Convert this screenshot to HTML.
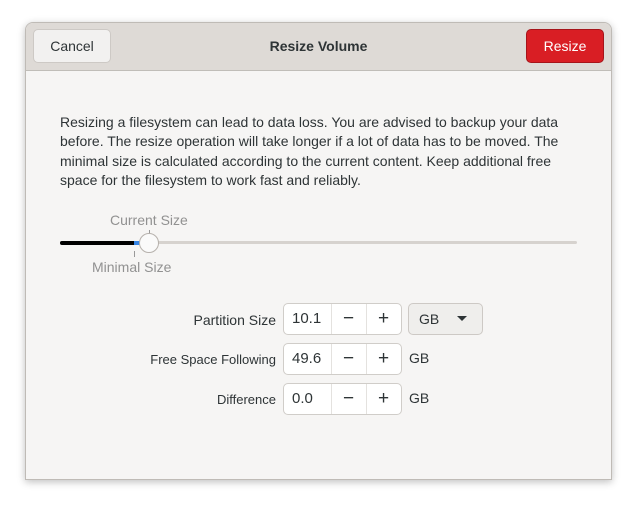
<!DOCTYPE html>
<html><head><style>
body{margin:0;width:636px;height:507px;background:#fff;font-family:"Liberation Sans","DejaVu Sans",sans-serif;position:relative;overflow:hidden}
.win{position:absolute;left:25px;top:22px;width:585px;height:456px;background:#f6f5f4;border:1px solid #bfbbb6;border-radius:8px 8px 0 0;box-shadow:0 2px 8px rgba(0,0,0,.25);overflow:hidden}
.hdr{position:absolute;left:0;top:0;width:585px;height:47px;background:#dedad6;border-bottom:1px solid #c0bdb8}
.btn{position:absolute;top:6px;height:32px;border-radius:5px;font-size:14px;line-height:32px;text-align:center}
.a{position:absolute;font-size:14px;color:#2e3436}
.p{position:absolute;left:34px;top:90px;font-size:14px;line-height:19.3px;color:#2e3436;width:530px}
.spin{position:absolute;left:257px;width:117px;height:30px;border:1px solid #d0cdc9;border-radius:5px;background:#fff}
.spin span{position:absolute;top:0;line-height:30px;font-size:15px;color:#2e3436}
.spin b{position:absolute;top:0;line-height:30px;font-size:19px;color:#2e3436;font-weight:normal}
.spin i{position:absolute;top:0;width:1px;height:30px;background:#e4e2df}
.lbl{position:absolute;right:335px;font-size:13px;color:#2e3436;text-align:right}
</style></head><body>
<div class="win">
<div class="hdr">
<div class="btn" style="left:7px;width:76px;background:#f2f1f0;border:1px solid #cdc9c5;color:#2e3436">Cancel</div>
<div class="a" style="left:0;width:585px;top:15px;text-align:center;font-weight:bold">Resize Volume</div>
<div class="btn" style="left:500px;width:76px;background:#d91e24;border:1px solid #a6141a;color:#fff">Resize</div>
</div>
<div class="p">Resizing a filesystem can lead to data loss. You are advised to backup your data before. The resize operation will take longer if a lot of data has to be moved. The minimal size is calculated according to the current content. Keep additional free space for the filesystem to work fast and reliably.</div>
<div class="a" style="left:84px;top:189px;color:#919191">Current Size</div>
<div style="position:absolute;left:123px;top:207px;width:1px;height:6px;background:#999"></div>
<div style="position:absolute;left:34px;top:218px;width:517px;height:3px;background:#d6d2ce;border-radius:2px"></div>
<div style="position:absolute;left:34px;top:218px;width:76px;height:4px;background:#000;border-radius:2px"></div>
<div style="position:absolute;left:108px;top:218px;width:10px;height:4px;background:#3584e4"></div>
<div style="position:absolute;left:113px;top:210px;width:18px;height:18px;border-radius:50%;background:#fafafa;border:1px solid #b6b1ac"></div>
<div style="position:absolute;left:108px;top:228px;width:1px;height:6px;background:#999"></div>
<div class="a" style="left:66px;top:236px;color:#919191">Minimal Size</div>

<div class="lbl" style="top:289px;font-size:14px">Partition Size</div>
<div class="spin" style="top:280px"><span style="left:8px">10.1</span><i style="left:47px"></i><b style="left:59px">−</b><i style="left:82px"></i><b style="left:94px">+</b></div>
<div style="position:absolute;left:382px;top:280px;width:73px;height:30px;border:1px solid #cdc9c5;border-radius:5px;background:#efeeec;font-size:14px;line-height:30px;color:#2e3436"><span style="position:absolute;left:10px">GB</span><span style="position:absolute;left:48px;top:12px;width:0;height:0;border-left:5px solid transparent;border-right:5px solid transparent;border-top:5px solid #2e3436"></span></div>

<div class="lbl" style="top:329px">Free Space Following</div>
<div class="spin" style="top:320px"><span style="left:8px">49.6</span><i style="left:47px"></i><b style="left:59px">−</b><i style="left:82px"></i><b style="left:94px">+</b></div>
<div class="a" style="left:383px;top:327px">GB</div>

<div class="lbl" style="top:369px">Difference</div>
<div class="spin" style="top:360px"><span style="left:8px">0.0</span><i style="left:47px"></i><b style="left:59px">−</b><i style="left:82px"></i><b style="left:94px">+</b></div>
<div class="a" style="left:383px;top:367px">GB</div>
</div>
</body></html>
